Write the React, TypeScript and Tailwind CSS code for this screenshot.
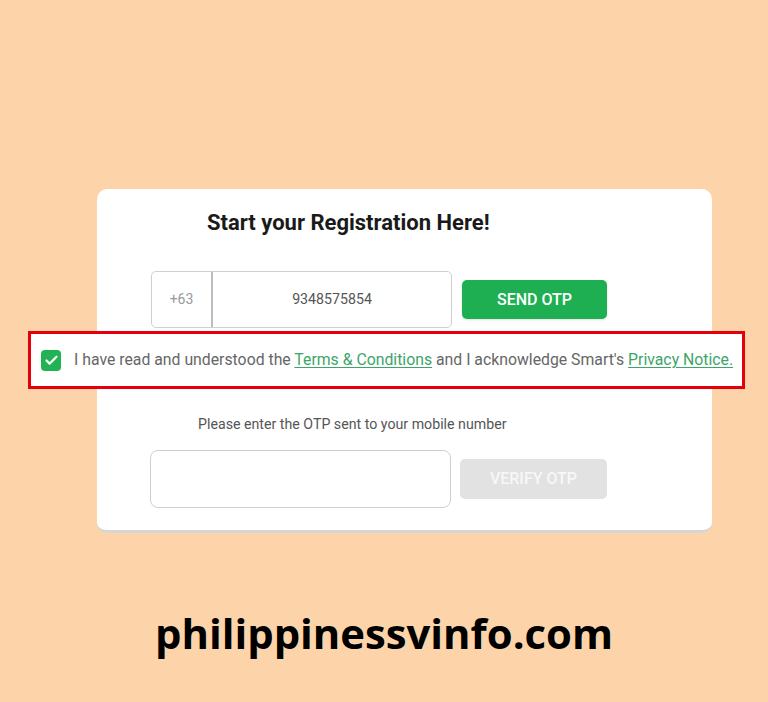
import { Check } from 'lucide-react';

export default function App() {
  return (
    <div className="min-h-[702px] w-[768px] bg-[#fdd4a9] overflow-hidden pt-[189px] font-['Roboto',sans-serif]">
      <div className="ml-[97px] w-[615px] bg-white rounded-[10px] border-b-[3px] border-[#d6d6d6] pt-[19px] pb-[22px]">
        <h1 className="pl-[110px] text-[22px] leading-[30px] font-bold text-[#1a1a1a]">
          Start your Registration Here!
        </h1>

        <div className="mt-[33px] pl-[54px] flex items-center gap-[10px]">
          <div className="w-[301px] h-[57px] flex rounded-[5px] border border-[#cfcfcf]">
            <div className="w-[61px] border-r-2 border-[#bdbdbd] flex items-center justify-center text-[14px] text-[#9a9a9a]">
              +63
            </div>
            <div className="flex-1 flex items-center justify-center text-[14.2px] text-[#555]">
              9348575854
            </div>
          </div>
          <button className="w-[145px] h-[39px] rounded-[5px] bg-[#1daf52] text-white text-[16px] font-medium shadow-sm">
            SEND OTP
          </button>
        </div>

        <div className="mt-[3px] -ml-[69px] -mr-[33px] h-[58px] bg-white border-[3px] border-[#e3000b] flex items-center pl-[10px]">
          <span className="w-[20px] h-[21px] rounded-[4px] bg-[#21b353] flex items-center justify-center">
            <Check className="w-[15px] h-[15px] text-white" strokeWidth={3.5} />
          </span>
          <p className="ml-[13px] text-[15.8px] text-[#666] whitespace-nowrap">
            I have read and understood the{' '}
            <span className="text-[#3da56a] underline underline-offset-2">Terms &amp; Conditions</span>{' '}
            and I acknowledge Smart's{' '}
            <span className="text-[#3da56a] underline underline-offset-2">Privacy Notice.</span>
          </p>
        </div>

        <p className="mt-[26px] pl-[101px] text-[14.2px] leading-[19px] text-[#555]">
          Please enter the OTP sent to your mobile number
        </p>

        <div className="mt-[16px] pl-[53px] flex items-center gap-[9px]">
          <div className="w-[301px] h-[58px] rounded-[8px] border border-[#cfcfcf] bg-white" />
          <button className="w-[147px] h-[40px] rounded-[5px] bg-[#e2e2e2] text-[#f7f7f7] text-[16px] font-medium">
            VERIFY OTP
          </button>
        </div>
      </div>

      <div className="mt-[75px] text-center font-['Open_Sans',sans-serif] font-bold text-[41.8px] leading-[50px] text-black">
        philippinessvinfo.com
      </div>
    </div>
  );
}
